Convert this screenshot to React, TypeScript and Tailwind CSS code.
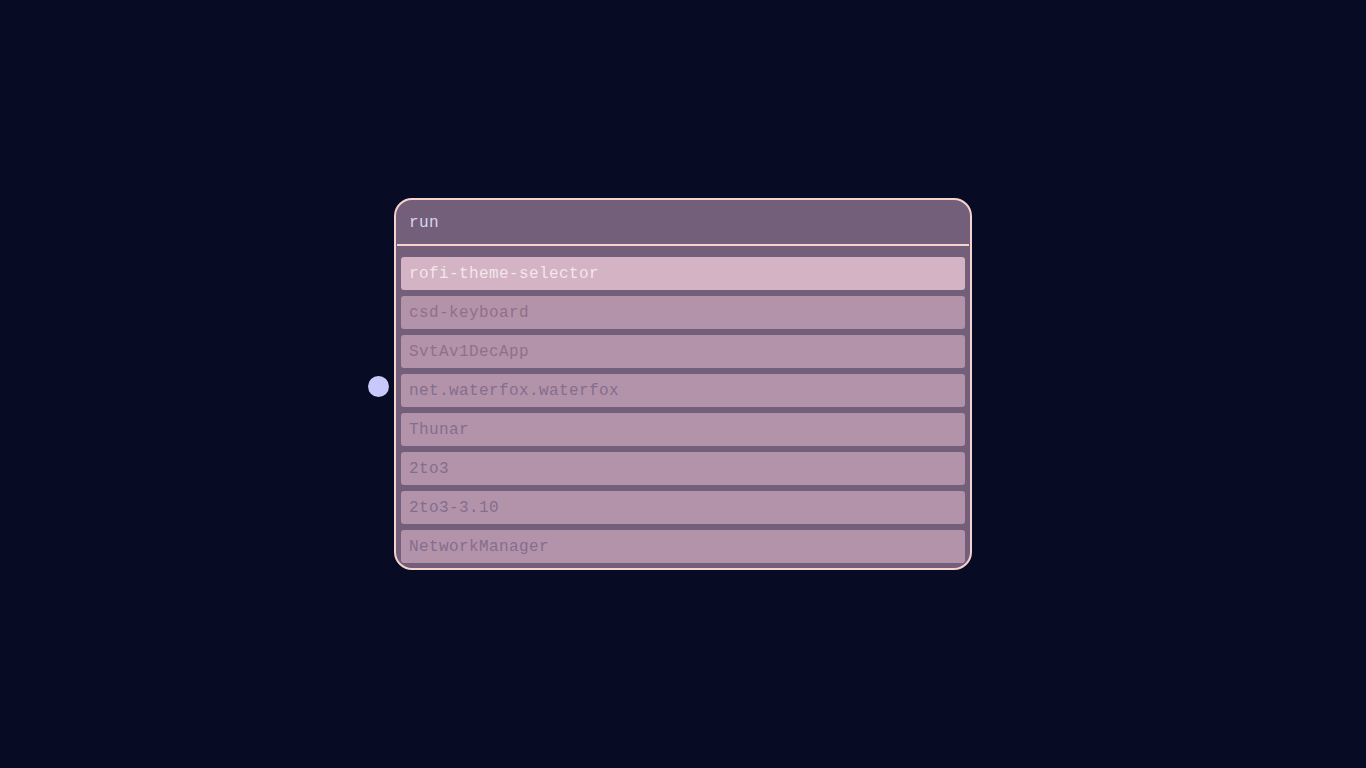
import React from 'react';

interface Entry {
    label: string;
    color: string;
}

const entries: Entry[] = [
    { label: 'csd-keyboard', color: 'text-[#926f86]' },
    { label: 'SvtAv1DecApp', color: 'text-[#926f86]' },
    { label: 'net.waterfox.waterfox', color: 'text-[#846e8e]' },
    { label: 'Thunar', color: 'text-[#846e8e]' },
    { label: '2to3', color: 'text-[#846e8e]' },
    { label: '2to3-3.10', color: 'text-[#846e8e]' },
    { label: 'NetworkManager', color: 'text-[#846e8e]' },
];

const App = () => {
    return (
        <div className="w-full h-screen bg-[#070b24] flex items-center justify-center font-['Liberation_Mono',monospace]">
            {/* launcher window */}
            <div className="relative w-[578px] rounded-[18px] border-2 border-[#f5d2cd] bg-[#735f79]">
                {/* dot on the left edge */}
                <div className="absolute left-[-28px] top-[176px] w-[21px] h-[21px] rounded-full bg-[#c9c8fa]" />

                {/* prompt */}
                <div className="h-[44px] flex items-center pt-[2px] px-[13px] text-[16px] tracking-[0.4px] text-[#dcd6ee]">
                    run
                </div>
                <div className="mx-px h-[2px] bg-[#f5d2cd]" />

                {/* list */}
                <div className="flex flex-col gap-[6px] pt-[11px] pb-[5px] pl-[5px] pr-[5px]">
                    <div className="h-[33px] rounded-[3px] bg-[#d3b3c4] flex items-center px-[8px] text-[16px] tracking-[0.4px] text-[#f3e6ec]">
                        rofi-theme-selector
                    </div>
                    {entries.map((item) => (
                        <div
                            key={item.label}
                            className={`h-[33px] rounded-[3px] bg-[#b393aa] flex items-center px-[8px] text-[16px] tracking-[0.4px] ${item.color}`}
                        >
                            {item.label}
                        </div>
                    ))}
                </div>
            </div>
        </div>
    );
};

export default App;
